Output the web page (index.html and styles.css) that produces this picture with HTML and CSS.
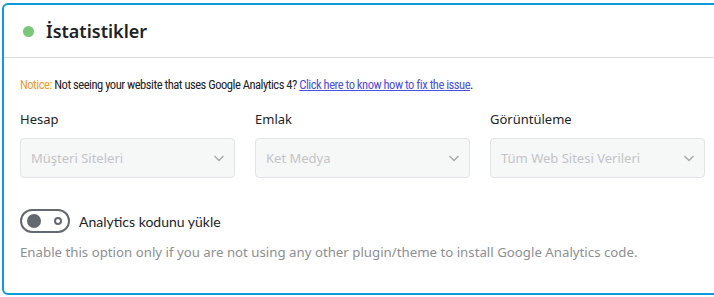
FILE: index.html
```html
<!DOCTYPE html>
<html lang="tr">
<head>
<meta charset="UTF-8">
<meta name="viewport" content="width=device-width, initial-scale=1.0">
<title>İstatistikler</title>
<link rel="stylesheet" href="styles.css">
</head>
<body>

<div class="card">
  <!-- başlık -->
  <div class="card-head">
    <span class="status-dot"></span>
    <h2>İstatistikler</h2>
  </div>

  <div class="card-body">
    <p class="notice"><span class="notice-label">Notice:</span> Not seeing your website that uses Google Analytics 4? <a href="#">Click here to know how to fix the issue</a>.</p>

    <!-- hesap seçimleri -->
    <div class="fields">
      <div class="field">
        <label>Hesap</label>
        <div class="select">
          <span>Müşteri Siteleri</span>
          <svg width="14" height="14" viewBox="0 0 14 14"><path d="M2.5 5l4.5 4.5L11.5 5" fill="none" stroke="#a7aaad" stroke-width="1.4"/></svg>
        </div>
      </div>
      <div class="field">
        <label>Emlak</label>
        <div class="select">
          <span>Ket Medya</span>
          <svg width="14" height="14" viewBox="0 0 14 14"><path d="M2.5 5l4.5 4.5L11.5 5" fill="none" stroke="#a7aaad" stroke-width="1.4"/></svg>
        </div>
      </div>
      <div class="field">
        <label>Görüntüleme</label>
        <div class="select">
          <span>Tüm Web Sitesi Verileri</span>
          <svg width="14" height="14" viewBox="0 0 14 14"><path d="M2.5 5l4.5 4.5L11.5 5" fill="none" stroke="#a7aaad" stroke-width="1.4"/></svg>
        </div>
      </div>
    </div>

    <!-- kod yükleme -->
    <div class="toggle-row">
      <span class="toggle"><span class="knob"></span><span class="ring"></span></span>
      <span class="toggle-label">Analytics kodunu yükle</span>
    </div>
    <p class="help">Enable this option only if you are not using any other plugin/theme to install Google Analytics code.</p>
  </div>
</div>

</body>
</html>
```

FILE: styles.css
```css
body {
  font-family: "Noto Sans", "Open Sans", sans-serif;
  background: #fff;
  color: #1d2327;
  margin: 0;
  padding: 3px 0 0 2px;
  overflow: hidden;
}
.card {
  width: 720px;
  border: 2px solid #0a9bd8;
  border-radius: 6px;
  background: #fff;
}
.card-head {
  display: flex;
  align-items: center;
  gap: 12px;
  height: 52px;
  padding: 0 16px 0 19px;
  border-bottom: 1px solid #dcdcde;
}
.status-dot {
  width: 11px;
  height: 11px;
  border-radius: 50%;
  background: #7ac77a;
}
.card-head h2 {
  margin: 0;
  font-size: 18px;
  font-weight: 600;
  color: #1d2327;
}
.card-body {
  padding: 16px 16px 0 16px;
  height: 219px;
}
.notice {
  margin: 0;
  padding-top: 1px;
  font-family: Roboto, "Liberation Sans", sans-serif;
  font-stretch: 75%;
  font-size: 12.6px;
  letter-spacing: -0.5px;
  line-height: 20px;
  color: #1d2327;
}
.notice-label { color: #f39a2c; }
.notice a { color: #4f4fe0; }

/* seçim kutuları */
.fields {
  display: grid;
  grid-template-columns: repeat(3, 215px);
  gap: 20px;
  margin-top: 15px;
}
.field label {
  display: block;
  font-size: 13px;
  line-height: 18px;
  margin-bottom: 10px;
}
.select {
  display: flex;
  align-items: center;
  justify-content: space-between;
  height: 38px;
  padding: 0 8px 0 10px;
  border: 1px solid #e2e4e7;
  border-radius: 4px;
  background: #f6f7f7;
  color: #c3c4c7;
  font-size: 13px;
}
.select svg { display: block; }

/* toggle */
.toggle-row {
  display: flex;
  align-items: center;
  gap: 9px;
  margin-top: 31px;
}
.toggle {
  display: flex;
  align-items: center;
  justify-content: space-between;
  box-sizing: border-box;
  width: 50px;
  height: 24px;
  padding: 0 6px 0 5px;
  border: 2px solid #646970;
  border-radius: 12px;
}
.knob {
  width: 14px;
  height: 14px;
  border-radius: 50%;
  background: #646970;
}
.ring {
  box-sizing: border-box;
  width: 8px;
  height: 8px;
  border-radius: 50%;
  border: 2px solid #646970;
}
.toggle-label {
  font-family: Lato, sans-serif;
  font-size: 14px;
  color: #1d2327;
}
.help {
  margin: 9px 0 0;
  font-size: 13.25px;
  line-height: 20px;
  color: #8c8f94;
}
```
